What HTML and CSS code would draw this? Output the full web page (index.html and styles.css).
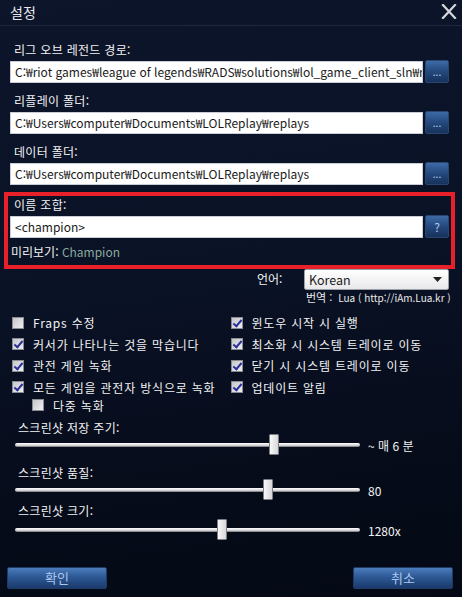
FILE: index.html
```html
<!DOCTYPE html>
<html lang="ko">
<head>
    <meta charset="UTF-8">
    <meta name="viewport" content="width=device-width, initial-scale=1.0">
    <link rel="stylesheet" href="styles.css">
    <title>설정</title>
</head>
<body>

    <div class="window">
        <div class="titlebar">
            <span class="title">설정</span>
            <svg class="close" width="16" height="15" viewBox="0 0 16 15">
                <path d="M2 1 L14 14 M14 1 L2 14" stroke="#d4d6dc" stroke-width="2.2" stroke-linecap="square"/>
            </svg>
        </div>

        <div class="content">
            <div class="field">
                <div class="label">리그 오브 레전드 경로:</div>
                <div class="row">
                    <div class="input">C:₩riot games₩league of legends₩RADS₩solutions₩lol_game_client_sln₩releases</div>
                    <div class="btn-small">...</div>
                </div>
            </div>

            <div class="field">
                <div class="label">리플레이 폴더:</div>
                <div class="row">
                    <div class="input">C:₩Users₩computer₩Documents₩LOLReplay₩replays</div>
                    <div class="btn-small">...</div>
                </div>
            </div>

            <div class="field">
                <div class="label">데이터 폴더:</div>
                <div class="row">
                    <div class="input">C:₩Users₩computer₩Documents₩LOLReplay₩replays</div>
                    <div class="btn-small">...</div>
                </div>
            </div>

            <div class="highlight">
                <div class="label">이름 조합:</div>
                <div class="row">
                    <div class="input">&lt;champion&gt;</div>
                    <div class="btn-small btn-help">?</div>
                </div>
                <div class="preview">미리보기: <span class="preview-value">Champion</span></div>
            </div>

            <div class="lang">
                <span class="lang-label">언어:</span>
                <div class="lang-box">
                    <div class="select">
                        <span>Korean</span>
                        <svg width="9" height="5" viewBox="0 0 9 5"><path d="M0 0 H9 L4.5 5 Z" fill="#222"/></svg>
                    </div>
                    <div class="credit"><span class="credit-key">번역 :</span> Lua ( http://iAm.Lua.kr )</div>
                </div>
            </div>

            <div class="checks">
                <div class="check-col">
                    <div class="check"><span class="box"></span>Fraps 수정</div>
                    <div class="check"><span class="box on"></span>커서가 나타나는 것을 막습니다</div>
                    <div class="check"><span class="box on"></span>관전 게임 녹화</div>
                    <div class="check"><span class="box on"></span>모든 게임을 관전자 방식으로 녹화</div>
                    <div class="check check-sub"><span class="box"></span>다중 녹화</div>
                </div>
                <div class="check-col check-right">
                    <div class="check"><span class="box on"></span>윈도우 시작 시 실행</div>
                    <div class="check"><span class="box on"></span>최소화 시 시스템 트레이로 이동</div>
                    <div class="check"><span class="box on"></span>닫기 시 시스템 트레이로 이동</div>
                    <div class="check"><span class="box on"></span>업데이트 알림</div>
                </div>
            </div>

            <div class="slider-group first">
                <div class="slider-label">스크린샷 저장 주기:</div>
                <div class="slider">
                    <div class="track"><span class="thumb" style="left: 254px"></span></div>
                    <span class="slider-value">~ 매 6 분</span>
                </div>
            </div>

            <div class="slider-group second">
                <div class="slider-label">스크린샷 품질:</div>
                <div class="slider">
                    <div class="track"><span class="thumb" style="left: 248px"></span></div>
                    <span class="slider-value">80</span>
                </div>
            </div>

            <div class="slider-group third">
                <div class="slider-label">스크린샷 크기:</div>
                <div class="slider">
                    <div class="track"><span class="thumb" style="left: 202px"></span></div>
                    <span class="slider-value">1280x</span>
                </div>
            </div>

            <div class="actions">
                <div class="btn">확인</div>
                <div class="btn">취소</div>
            </div>
        </div>
    </div>

</body>
</html>
```

FILE: styles.css
```css
body {
    margin: 0;
    background-color: #050a17;
    font-family: "Noto Sans CJK KR", "Noto Sans", sans-serif;
    color: #f2f2f2;
}

.window {
    width: 462px;
    height: 597px;
    overflow: hidden;
    background: linear-gradient(172deg, #0d152b 0%, #0a1226 45%, #060b19 80%, #040915 100%);
}

.titlebar {
    height: 25px;
    border-bottom: 1px solid #1c2640;
    display: flex;
    align-items: center;
    justify-content: space-between;
    padding: 0 5px 0 10px;
}

.title {
    font-size: 14px;
    line-height: 25px;
    color: #e8e8ec;
}

.close {
    margin-top: -3px;
}

.content {
    padding: 0 13px 0 10px;
}

.field {
    margin-top: 9px;
}

.field:first-child {
    margin-top: 15px;
}

.label {
    font-size: 12px;
    line-height: 18px;
    height: 18px;
    letter-spacing: 0.3px;
    padding-left: 4px;
    margin-bottom: 1px;
}

.row {
    display: flex;
    align-items: center;
    gap: 2px;
    height: 23px;
}

.input {
    flex: 1;
    height: 22px;
    box-sizing: border-box;
    background-color: #fff;
    border: 1px solid #c8ccd4;
    color: #1a1a1a;
    font-size: 12px;
    line-height: 20px;
    padding-left: 4px;
    white-space: nowrap;
    overflow: hidden;
}

.btn-small {
    width: 24px;
    height: 23px;
    box-sizing: border-box;
    border-radius: 2px;
    border: 1px solid #2a4670;
    background: linear-gradient(#3d6aa6, #24497e 50%, #17325c);
    color: #b8cdf0;
    font-size: 10px;
    line-height: 22px;
    text-align: center;
}

.btn-help {
    font-size: 12px;
    line-height: 21px;
}

.highlight {
    margin: 7px -6px 0 -6px;
    border: 4px solid #e8202a;
    padding: 0 2px 4px 2px;
}

.preview {
    font-size: 12px;
    line-height: 18px;
    height: 18px;
    margin-top: 5px;
    padding-left: 1px;
}

.preview-value {
    color: #8ba99f;
}

.lang {
    display: flex;
    justify-content: flex-end;
    align-items: flex-start;
    height: 37px;
}

.lang-label {
    font-size: 12px;
    line-height: 20px;
    width: 47px;
}

.lang-box {
    width: 145px;
}

.select {
    height: 21px;
    box-sizing: border-box;
    border: 1px solid #9aa0a8;
    border-radius: 2px;
    background: linear-gradient(#ffffff, #e8e8ea);
    display: flex;
    align-items: center;
    justify-content: space-between;
    padding: 0 6px 0 4px;
    color: #1a1a1a;
    font-size: 12.5px;
}

.credit {
    font-size: 10px;
    line-height: 15px;
    height: 15px;
    padding-left: 2px;
    color: #eaeaea;
    white-space: nowrap;
}

.credit-key {
    font-size: 11px;
    margin-right: 3px;
}

.checks {
    display: flex;
    margin-top: 6px;
    padding-left: 2px;
}

.check-col {
    width: 222px;
}

.check {
    display: flex;
    align-items: center;
    height: 21.5px;
    font-size: 12px;
    letter-spacing: 0.8px;
    white-space: nowrap;
}

.check-sub {
    height: 14px;
    padding-left: 20px;
}

.box {
    flex: none;
    width: 12px;
    height: 12px;
    box-sizing: border-box;
    border: 1px solid #8a8c92;
    background: linear-gradient(135deg, #c4c6ca, #eeeff1);
    margin-right: 9px;
    position: relative;
}

.box.on::after {
    content: "";
    position: absolute;
    left: 3px;
    top: 0;
    width: 3px;
    height: 7px;
    border-right: 2px solid #2d2f9a;
    border-bottom: 2px solid #2d2f9a;
    transform: rotate(40deg);
}

.slider-group.first {
    margin-top: 8px;
}

.slider-group.second {
    margin-top: 11px;
}

.slider-group.third {
    margin-top: 4px;
}

.slider-label {
    font-size: 12px;
    line-height: 16px;
    height: 16px;
    letter-spacing: 0.3px;
    padding-left: 8px;
}

.slider {
    display: flex;
    align-items: center;
    height: 18px;
}

.third .slider {
    margin-top: 2px;
}

.track {
    position: relative;
    width: 345px;
    height: 4px;
    margin-left: 5px;
    border-radius: 2px;
    background: linear-gradient(#ffffff, #c8c8cc);
    border-bottom: 1px solid #8a8c90;
    box-sizing: border-box;
}

.thumb {
    position: absolute;
    top: -9px;
    width: 10px;
    height: 21px;
    box-sizing: border-box;
    border: 1px solid #7c7e84;
    border-radius: 1px;
    background: linear-gradient(90deg, #f8f8f8, #d8d8dc);
}

.slider-value {
    margin-left: 8px;
    font-size: 12px;
    white-space: nowrap;
}

.actions {
    display: flex;
    justify-content: space-between;
    margin: 28px -4px 0 -3px;
}

.btn {
    width: 100px;
    height: 22px;
    box-sizing: border-box;
    border-radius: 2px;
    border: 1px solid #1e3a66;
    background: linear-gradient(#4c7cbc, #2d5894 45%, #1a3a6c);
    color: #aac6ee;
    font-size: 13px;
    line-height: 20px;
    text-align: center;
}
```
